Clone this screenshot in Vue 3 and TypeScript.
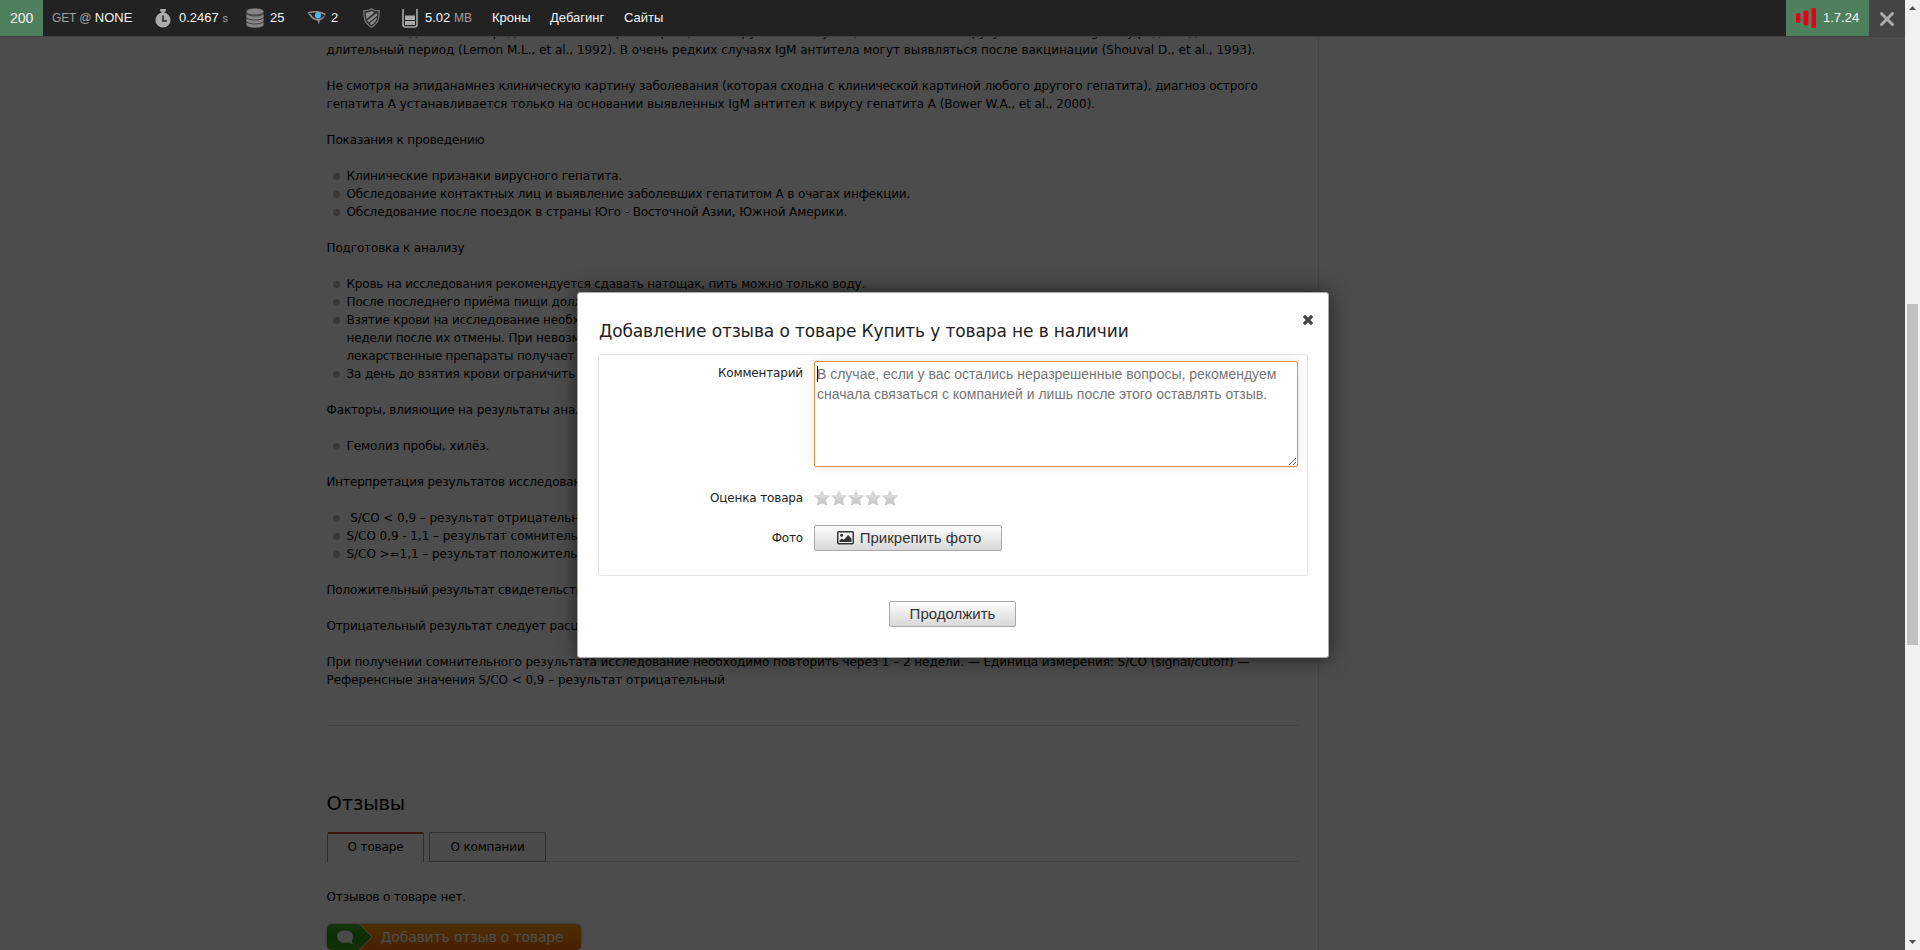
<script setup lang="ts">
interface Line { text: string; bullet?: boolean; indent?: boolean; ls?: number }

const lines: Line[] = [
  { text: 'Антитела, выделяемые в среднем на пике острой инфекции, обнаруживаются у пациентов, так как вирусу свойственны IgM, и у ряда людей' },
  { text: 'длительный период (Lemon M.L., et al., 1992). В очень редких случаях IgM антитела могут выявляться после вакцинации (Shouval D., et al., 1993).', ls: -0.02 },
  { text: '' },
  { text: 'Не смотря на эпиданамнез клиническую картину заболевания (которая сходна с клинической картиной любого другого гепатита), диагноз острого' },
  { text: 'гепатита А устанавливается только на основании выявленных IgM антител к вирусу гепатита А (Bower W.A., et al., 2000).', ls: -0.06 },
  { text: '' },
  { text: 'Показания к проведению' },
  { text: '' },
  { text: 'Клинические признаки вирусного гепатита.', bullet: true },
  { text: 'Обследование контактных лиц и выявление заболевших гепатитом А в очагах инфекции.', bullet: true },
  { text: 'Обследование после поездок в страны Юго - Восточной Азии, Южной Америки.', bullet: true, ls: -0.11 },
  { text: '' },
  { text: 'Подготовка к анализу' },
  { text: '' },
  { text: 'Кровь на исследования рекомендуется сдавать натощак, пить можно только воду.', bullet: true, ls: -0.19 },
  { text: 'После последнего приёма пищи должно пройти не менее 8 часов.', bullet: true },
  { text: 'Взятие крови на исследование необходимо проводить до начала приёма', bullet: true },
  { text: 'недели после их отмены. При невозможности отмены следует указать', indent: true },
  { text: 'лекарственные препараты получает пациент.', indent: true, ls: -0.19 },
  { text: 'За день до взятия крови ограничить жирную пищу.', bullet: true },
  { text: '' },
  { text: 'Факторы, влияющие на результаты анализа' },
  { text: '' },
  { text: 'Гемолиз пробы, хилёз.', bullet: true, ls: -0.07 },
  { text: '' },
  { text: 'Интерпретация результатов исследования' },
  { text: '' },
  { text: '\u00a0S/CO < 0,9 – результат отрицательный', bullet: true, ls: -0.05 },
  { text: 'S/CO 0,9 - 1,1 – результат сомнительный', bullet: true, ls: -0.05 },
  { text: 'S/CO >=1,1 – результат положительный', bullet: true, ls: -0.05 },
  { text: '' },
  { text: 'Положительный результат свидетельствует об инфекции.', ls: -0.2 },
  { text: '' },
  { text: 'Отрицательный результат следует расценивать как норму.', ls: -0.19 },
  { text: '' },
  { text: 'При получении сомнительного результата исследование необходимо повторить через 1 – 2 недели. — Единица измерения: S/CO (signal/cutoff) —', ls: -0.05 },
  { text: 'Референсные значения S/CO < 0,9 – результат отрицательный', ls: -0.04 },
]
</script>

<template>
  <div class="screen">
    <div class="view">
      <main class="page">
        <div
          v-for="(l, i) in lines"
          :key="i"
          class="line"
          :class="{ bullet: l.bullet, indent: l.indent }"
          :style="{ letterSpacing: (l.ls ?? -0.14) + 'px' }"
        >{{ l.text }}</div>
        <hr class="rule" />
        <h2 class="heading">Отзывы</h2>
        <div class="tabs">
          <div class="tab active">О товаре</div>
          <div class="tab second">О компании</div>
        </div>
        <div class="empty">Отзывов о товаре нет.</div>
        <div class="add">
          <svg class="add-mark" width="48" height="26" viewBox="0 0 48 26">
            <defs>
              <linearGradient id="leaf" x1="0" y1="0" x2="0" y2="1">
                <stop offset="0" stop-color="#4db224" />
                <stop offset=".5" stop-color="#2c920c" />
                <stop offset="1" stop-color="#43a820" />
              </linearGradient>
            </defs>
            <path d="M0 0H33L45 13L33 26H0Z" fill="url(#leaf)" />
            <path d="M32.500 0L45 13L32.500 26" fill="none" stroke="#e9e5c0" />
            <path d="M18 6.500c-5 0-8 2.500-8 6s3 6.500 8 6.500c1.500 0 2.500-.2 3.500-.7 1.300 1 3 1.500 4.500 1.400-1-1-1.300-2-1.200-3.200 1-1 1.200-2.300 1.200-4 0-3.500-3-6-8-6z" fill="#f4f4f4" />
          </svg>
          <span>Добавить отзыв о товаре</span>
        </div>
      </main>

      <div class="overlay">
        <section class="modal">
          <svg class="close" width="10" height="10" viewBox="0 0 10 10">
            <path d="M2 2L8 8M8 2L2 8" stroke="#444" stroke-width="3.200" stroke-linecap="square" />
          </svg>
          <h1 class="title">Добавление отзыва о товаре Купить у товара не в наличии</h1>
          <div class="fieldset">
            <div class="row row-comment">
              <label>Комментарий</label>
              <div class="area-wrap">
                <textarea placeholder="В случае, если у вас остались неразрешенные вопросы, рекомендуем сначала связаться с компанией и лишь после этого оставлять отзыв."></textarea>
                <i class="caret"></i>
              </div>
            </div>
            <div class="row row-rate">
              <label>Оценка товара</label>
              <div class="stars">
                <svg v-for="n in 5" :key="n" width="17" height="16" viewBox="0 0 17 16">
                  <path d="M8 .2L10.400 5L16 5.700L12 9.600L13.200 15.200L8 12.700L2.800 15.200L4.100 9.600L0 5.700L5.600 5Z" fill="#cdcdcd" />
                  <path d="M8 .2L10.400 5L16 5.700L8 8.500L0 5.700L5.600 5Z" fill="#d9d9d9" />
                  <path d="M2.800 15.200L8 12.700L13.200 15.200" fill="none" stroke="#bdbdbd" stroke-width=".8" />
                </svg>
              </div>
            </div>
            <div class="row row-photo">
              <label>Фото</label>
              <button class="btn attach" type="button">
                <svg width="17" height="14" viewBox="0 0 17 14">
                  <rect x=".75" y=".75" width="15.500" height="12" rx="1" fill="#f4f4f4" stroke="#333" stroke-width="1.500" />
                  <circle cx="4.600" cy="4.300" r="1.500" fill="#333" />
                  <path d="M2.500 11V9.200L5 7.500L6.800 8.800L11.200 4L14.500 7.500V11Z" fill="#333" />
                </svg>
                <span>Прикрепить фото</span>
              </button>
            </div>
          </div>
          <button class="btn submit" type="button"><span>Продолжить</span></button>
        </section>
      </div>

      <header class="bar">
        <div class="status">200</div>
        <div class="item route"><span class="dim">GET @</span> NONE</div>
        <div class="item time">
          <svg width="16" height="19" viewBox="0 0 16 19">
            <rect x="5" y="0" width="6" height="2.500" rx=".8" fill="#aaa" />
            <rect x="6.500" y="2" width="3" height="2" fill="#aaa" />
            <circle cx="8" cy="11" r="7.600" fill="#aaa" />
            <path d="M8 6.500V12H11.800" fill="none" stroke="#222" stroke-width="1.500" />
          </svg>
          <span>0.2467 <small>s</small></span>
        </div>
        <div class="item db">
          <svg width="18" height="20" viewBox="0 0 18 20" fill="#858585" stroke="#222" stroke-width=".7">
            <path d="M0 14v2.500c0 2 4 3.500 9 3.500s9-1.500 9-3.500V14z" />
            <path d="M0 10v2.500c0 2 4 3.500 9 3.500s9-1.500 9-3.500V10z" />
            <path d="M0 6v2.500c0 2 4 3.500 9 3.500s9-1.500 9-3.500V6z" />
            <path d="M0 3.500v1C0 6.500 4 8 9 8s9-1.500 9-3.500v-1z" />
            <ellipse cx="9" cy="3.500" rx="9" ry="3.500" />
          </svg>
          <span>25</span>
        </div>
        <div class="item eye">
          <svg width="20" height="14" viewBox="0 0 20 14">
            <path d="M.8 2C6 .2 13 .2 18.500 3.500" fill="none" stroke="#8d8d8d" stroke-width="1.500" />
            <path d="M1 2.200L4 3.200C6 7 9 8 11 7.800C14 7.600 16.500 6 18.500 3.500C17 7.500 15 8.800 12.800 9.300L12 13.500L10.300 9.600C5.500 9 3.500 6 1 2.200Z" fill="#8d8d8d" />
            <circle cx="11" cy="4.400" r="3.100" fill="#4db4e4" />
          </svg>
          <span>2</span>
        </div>
        <div class="item shield">
          <svg width="17" height="20" viewBox="0 0 17 20">
            <path d="M8.500 .7C6.500 2.300 3.800 2.800 .8 2.700C.6 10 1.500 15.500 8.500 19.200C15.500 15.500 16.400 10 16.200 2.700C13.200 2.800 10.500 2.300 8.500 .7Z" fill="#303030" stroke="#777" stroke-width="1.200" />
            <path d="M8.500 3C6.800 4 5 4.600 3 4.700C2.900 7 3 9 3.600 11L11.500 4.200C10.400 3.900 9.400 3.500 8.500 3Z" fill="#8e8e8e" />
            <path d="M13.900 4.900L4.300 12.600L5.700 14.600L14 7.800ZM13.800 9.600L6.700 15.600L8.500 16.900C11.800 15 13.300 12.600 13.800 9.600Z" fill="#8e8e8e" />
          </svg>
        </div>
        <div class="item mem">
          <svg width="16" height="19" viewBox="0 0 16 19">
            <path d="M1 0V15.500Q1 18 3.500 18H12.500Q15 18 15 15.500V0" fill="none" stroke="#aaa" stroke-width="1.600" />
            <rect x="3" y="6.500" width="10" height="4.500" fill="#aaa" />
            <rect x="3" y="12" width="10" height="4" fill="#aaa" />
          </svg>
          <span>5.02 <span class="dim">MB</span></span>
        </div>
        <div class="item l1">Кроны</div>
        <div class="item l2">Дебагинг</div>
        <div class="item l3">Сайты</div>
        <div class="version">
          <svg width="20" height="20" viewBox="0 0 20 20" fill="#e2001a">
            <rect x="0" y="5" width="4.500" height="10" rx="1.800" />
            <rect x="7.500" y="2.500" width="5" height="15" rx="1.800" />
            <rect x="15.500" y="0" width="4.500" height="20" rx="1.200" />
          </svg>
          <span>1.7.24</span>
        </div>
        <div class="hide">
          <svg width="16" height="16" viewBox="0 0 16 16">
            <path d="M2.500 2.500L13.500 13.500M13.500 2.500L2.500 13.500" stroke="#aaa" stroke-width="3" stroke-linecap="round" />
          </svg>
        </div>
      </header>
    </div>

    <div class="scroll">
      <svg width="7" height="4" viewBox="0 0 7 4"><path d="M3.500 0L7 4H0Z" fill="#505050" /></svg>
      <div class="thumb"></div>
      <svg width="7" height="4" viewBox="0 0 7 4"><path d="M3.500 4L7 0H0Z" fill="#505050" /></svg>
    </div>
  </div>
</template>

<style>
body { overflow: hidden; }
</style>

<style scoped>
* { box-sizing: border-box; }
.screen {
  display: flex;
  width: 1920px;
  height: 950px;
  overflow: hidden;
  background: #fff;
  font: 12px/18px "DejaVu Sans", sans-serif;
  color: #000;
}
.view { position: relative; width: 1905px; height: 950px; overflow: hidden; }
.page {
  width: 992px;
  height: 950px;
  margin-left: 326.500px;
  padding: 23px 20px 0 0;
  border-right: 1px solid #e4e4e4;
  letter-spacing: -0.14px;
}
.line { height: 18px; white-space: nowrap; }
.indent { padding-left: 20px; }
.bullet { display: flex; align-items: center; white-space: pre; }
.bullet::before {
  content: "";
  width: 7px;
  height: 7px;
  margin: 0 7px 0 6px;
  border-radius: 50%;
  background: #bcbcbc;
}
.rule { height: 1px; margin: 36px 0 0; border: 0; background: #dcdcdc; }
.heading { margin: 65px 0 0; font-size: 19.500px; line-height: 26px; font-weight: 400; }
.tabs {
  display: flex;
  margin-top: 15px;
  height: 30px;
  padding-left: 0.500px;
  background: linear-gradient(#dcdcdc, #dcdcdc) 98px 29px / 100% 1px no-repeat;
}
.tab {
  height: 30px;
  border: 1px solid #9c9c9c;
  border-radius: 2px 2px 0 0;
  line-height: 28px;
  text-align: center;
}
.active { width: 97px; border-top: 2px solid #d8392c; border-bottom: 0; line-height: 26px; }
.second { width: 117px; margin-left: 5px; background: #fafafa; }
.empty { margin-top: 26px; height: 18px; }
.add {
  display: flex;
  align-items: center;
  width: 254.500px;
  height: 26px;
  margin-top: 18px;
  border-radius: 5px;
  overflow: hidden;
  background: linear-gradient(#ff9d0a, #f36a00);
  box-shadow: 0 0 3px #999;
  color: #fff;
  font-size: 14px;
  letter-spacing: -0.17px;
}
.add-mark { margin-right: 6px; }

.overlay {
  position: absolute;
  inset: 0;
  display: grid;
  place-items: center;
  padding-left: 1px;
  background: rgba(0, 0, 0, 0.7);
}
.modal {
  position: relative;
  width: 752px;
  height: 366px;
  padding: 24px 20px 0;
  border: 1px solid #aaa;
  border-radius: 3px;
  background: #fff;
  box-shadow: 0 0 20px rgba(0, 0, 0, 0.6);
  color: #222;
}
.close { position: absolute; right: 15px; top: 21.500px; }
.title {
  margin: 0 0 0 1px;
  height: 37px;
  font-size: 17px;
  line-height: 28px;
  font-weight: 400;
  letter-spacing: -0.12px;
  white-space: nowrap;
}
.fieldset { height: 222px; padding: 6px 9px 0 0; border: 1px solid #e4e4e4; border-radius: 3px; }
.row { display: flex; }
.row label { width: 204px; margin-right: 11px; text-align: right; letter-spacing: -0.16px; line-height: 18px; }
.row-comment { height: 106px; }
.row-comment label { padding-top: 3px; }
.area-wrap { position: relative; width: 484px; height: 106px; }
textarea {
  display: block;
  width: 484px;
  height: 106px;
  margin: 0;
  padding: 2px;
  border: 1px solid #df914b;
  border-radius: 2px;
  outline: 0;
  background: #fff;
  box-shadow: 0 0 12px rgba(0, 0, 0, 0.1);
  font: 14px/20px "Liberation Sans", sans-serif;
}
textarea::placeholder { color: #757575; letter-spacing: -0.01px; }
.caret { position: absolute; left: 3px; top: 5px; width: 1px; height: 16px; background: #000; }
.row-rate { margin-top: 22px; height: 36px; }
.stars { display: flex; padding-top: 1px; }
.row-photo label { padding-top: 4px; }
.btn {
  display: flex;
  align-items: center;
  justify-content: center;
  height: 26px;
  padding: 0 0 2px;
  border: 1px solid #a8a8a8;
  border-radius: 2px;
  background: linear-gradient(#fdfdfd, #d8d8d8);
  color: #333;
  font: 15px "Liberation Sans", sans-serif;
}
.attach { width: 188px; gap: 6px; padding-left: 2px; }
.attach svg { position: relative; top: 1px; }
.submit { width: 127px; margin: 25px 0 0 291px; }

.bar {
  position: absolute;
  inset: 0 0 auto 0;
  display: flex;
  height: 36px;
  background: #222;
  box-shadow: 0 1px 0 #414141;
  color: #f5f5f5;
  font: 13px/29px "Liberation Sans", sans-serif;
  white-space: nowrap;
}
.status { width: 43px; padding-left: 10px; background: #4f805d; font-size: 14px; line-height: 36px; }
.item { display: flex; align-items: center; line-height: 36px; height: 36px; }
.item > span, .version > span { position: relative; top: -0.500px; }
.dim, small { color: #a0a0a0; }
.dim { font-size: 12px; }
small { font-size: 11px; }
.route { display: block; width: 112px; padding-left: 9px; }
.route .dim { letter-spacing: -0.15px; }
.time { width: 91px; gap: 8px; }
.db { width: 61px; gap: 6px; }
.eye { width: 56px; gap: 4px; }
.shield { width: 39px; }
.mem { width: 90px; gap: 7px; }
.l1 { width: 58px; }
.l2 { width: 74px; }
.version { display: flex; align-items: center; width: 83px; margin-left: auto; padding-left: 10px; gap: 7px; background: #4f805d; }
.hide { display: grid; place-items: center; width: 36px; padding-top: 2px; background: #444; }

.scroll {
  display: flex;
  flex-direction: column;
  align-items: center;
  justify-content: space-between;
  width: 15px;
  padding: 6px 0;
  background: #f1f1f1;
}
.thumb { width: 11px; height: 341px; margin: 1px 0 2px; background: #c1c1c1; }
</style>
